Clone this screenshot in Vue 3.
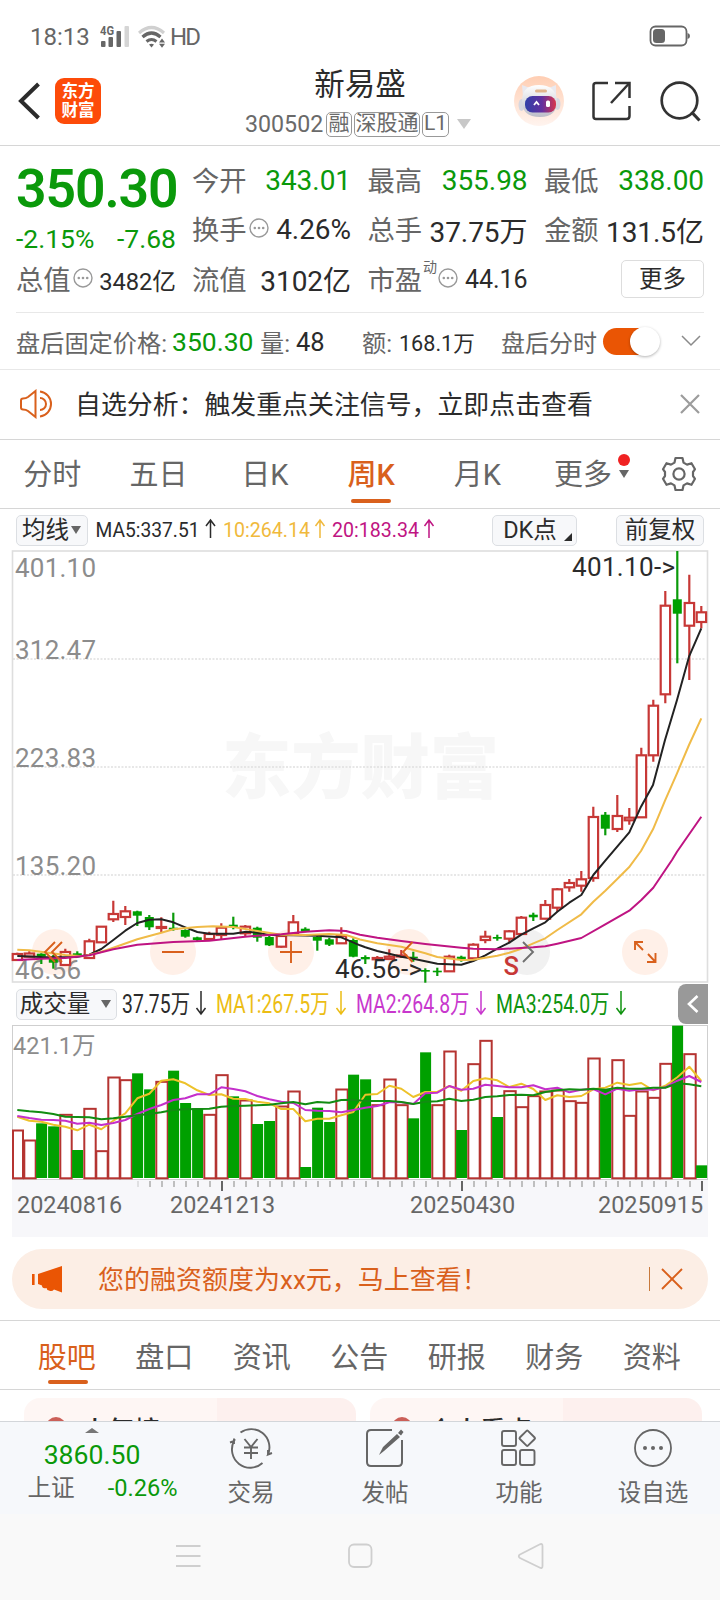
<script setup>
const X0 = 17.3
const STEP = 12
const cx = (i) => X0 + STEP * i

// Weekly candles: [direction, high, body top, body bottom, low], y in page pixels
const rows = [
  ['r', 952.7, 954, 960, 960], ['r', 951.3, 953.5, 956.7, 957.3], ['g', 953.3, 953.7, 956.7, 964], ['g', 955, 957.3, 962.7, 968.7],
  ['r', 948.7, 952, 965, 966], ['g', 951.3, 953.3, 955.3, 956.7], ['r', 938.7, 941.3, 958, 958.7], ['r', 926, 926.7, 942.3, 942.3],
  ['r', 900.7, 914, 919.3, 922], ['r', 906, 911.3, 917, 925], ['g', 910.7, 911.3, 915.7, 926], ['g', 915, 917, 927.3, 930],
  ['r', 917.3, 927, 928, 932], ['g', 912.7, 927.7, 929.7, 930.7], ['g', 929.3, 930, 936.7, 937.7], ['g', 936.7, 937.3, 940, 941.3],
  ['r', 931.7, 934, 939, 941], ['r', 923.3, 927.7, 935, 940], ['g', 916.7, 924.7, 927, 929.3], ['r', 925, 926.7, 933.3, 936],
  ['g', 926.7, 927.7, 937.7, 941.7], ['g', 935, 937, 945.3, 946], ['r', 934, 936, 946.7, 947.7], ['r', 915, 922.3, 934, 935.3],
  ['g', 927.3, 928.7, 931.7, 932.3], ['g', 936, 937, 940.7, 950.7], ['g', 937.7, 939.3, 944.7, 946], ['r', 927.3, 936, 943.3, 944],
  ['g', 938.3, 940, 956.7, 957.3], ['g', 955.3, 957, 959.3, 964], ['r', 956, 958, 959.3, 960], ['r', 949.3, 956.7, 959, 960],
  ['r', 950, 955.5, 956.5, 958], ['g', 951.7, 956.7, 958.3, 961.7], ['g', 968.3, 970, 971.7, 982.7], ['g', 967.7, 970.7, 972.3, 976],
  ['r', 954.7, 956.7, 971.3, 971.3], ['g', 955.7, 956.7, 960, 961.7], ['r', 943.3, 944.7, 958.3, 960], ['r', 930.7, 936.7, 940, 943.3],
  ['g', 934.7, 937, 938.7, 940.7], ['r', 930, 931.3, 938.7, 943.3], ['r', 916, 917.7, 934, 934], ['g', 912.7, 914.7, 917.3, 921],
  ['r', 900, 905, 918.7, 919.3], ['r', 888, 889.3, 907.7, 911.7], ['r', 879, 883, 887.3, 891.7], ['r', 871, 879.3, 885.7, 891.7],
  ['r', 806.7, 817, 878, 881.7], ['g', 812, 814.7, 828.7, 835.3], ['r', 795, 816, 829, 832], ['r', 808, 817.7, 820.3, 824.7],
  ['r', 747.7, 755.3, 817.3, 817.7], ['r', 699.7, 705.7, 755.3, 761.7], ['r', 591, 605.7, 694.3, 703.3], ['g', 551, 599.3, 613.7, 663.3],
  ['r', 574.7, 603, 625.7, 680], ['r', 606, 612.3, 622, 628.3],
]
const candles = rows.map(([d, h, t, b, l], i) => ({ x: cx(i), d, h, l, t, b }))

const ma5 = '17.3,956 41.3,957 65.3,957.3 77.3,956.7 89.3,954.7 101.3,949 113.3,940 125.3,930.7 137.3,923 149.3,919.7 161.3,919.3 173.3,922.3 185.3,927.3 197.3,932 209.3,933.7 233.3,933.7 246,931.7 257.3,932.7 269.3,935 293.3,935.3 317.3,935.7 341.3,937.3 360,945.3 365.3,947.3 377.3,951 389.3,953.7 401.3,956.7 413.3,958.7 425.3,961.3 437.3,963.7 461.3,964.7 473.3,961 485.3,955.3 497.3,948.7 509.3,942.7 521.3,934.7 533.3,928.3 545.3,922.3 557.3,911.7 569.3,902.7 581.3,895 593.3,875 605.3,860.7 629.3,832.3 641,806.7 653,785 665,740 677,700 689,656.7 701.3,628.3'
const ma10 = '17.3,949.7 29.3,950.3 50,953 65.3,955 83,956.3 100,952.3 113.3,947.7 137.3,939.3 149.3,936 161.3,932.7 173.3,929.3 197.3,927 213,926.3 233.3,927 257.3,931 281.3,934.7 305.3,935 329.3,934 346,935 360,939.5 377.3,943.3 401.3,946.7 425.3,953.3 437.3,957 461.3,960 473.3,959.7 497.3,955.7 509.3,952.7 521.3,948.7 533.3,943.3 545.3,938.3 557.3,930 581.3,914.3 593.3,901.7 605.3,890.7 617,879.3 629,867.3 641,851 653,829.3 665,800.7 677,773.3 689,745 701.3,718.3'
const ma20 = '17.3,960 41.3,958.7 65.3,958 89.3,955.3 113.3,949.3 137.3,944.7 173.3,942 209.3,940.7 245,936.7 257.3,935.7 281.3,934.3 305.3,931.7 329.3,930.3 346,931 360,934.7 377.3,937.7 401.3,941 425.3,944 461.3,947.7 473.3,948.7 497.3,949.3 533.3,947.3 545.3,946.3 557.3,943.7 581.3,938 605.3,924.3 629.3,910.7 641.3,900 653.3,887.7 672,860 677,851.7 701.3,816.7'

// Volume bars: top offset in thirds of a pixel below y = 1020
const volTop = [330, 360, 310, 319, 283, 390, 265, 392, 171, 179, 160, 208, 184, 152, 249, 265, 283, 164, 229, 240, 312, 303, 258, 213, 441, 263, 306, 207, 164, 178, 254, 177, 254, 295, 97, 254, 93, 330, 131, 61, 291, 212, 260, 227, 213, 210, 242, 247, 114, 210, 119, 286, 213, 232, 130, 17, 101, 436]
const flipped = { 35: 'r', 43: 'r', 57: 'g' }
const volumes = volTop.map((v, i) => ({ x: cx(i), y: 1020 + v / 3, d: flipped[i] || rows[i][0] }))
const pts = (a) => a.map((v, i) => `${cx(i).toFixed(1)},${(1020 + v / 3).toFixed(1)}`).join(' ')
const vma1 = pts([290, 302, 305, 314, 320, 331, 314, 328, 302, 280, 235, 221, 182, 178, 190, 211, 225, 223, 236, 237, 245, 250, 267, 267, 304, 296, 296, 286, 276, 224, 222, 197, 206, 231, 216, 216, 198, 212, 183, 175, 181, 201, 191, 207, 240, 226, 231, 228, 208, 203, 188, 195, 189, 211, 197, 172, 140, 183])
const vma2 = pts([288, 294, 299, 300, 302, 311, 308, 315, 309, 300, 282, 267, 255, 240, 235, 223, 223, 202, 207, 214, 228, 238, 245, 249, 270, 272, 273, 277, 270, 263, 258, 247, 247, 252, 220, 218, 198, 209, 206, 194, 198, 202, 202, 196, 208, 203, 217, 209, 207, 223, 206, 212, 208, 209, 202, 182, 168, 186])
const vma3 = pts([270, 274, 277, 282, 290, 291, 292, 298, 295, 290, 286, 282, 277, 270, 268, 267, 266, 260, 258, 257, 256, 254, 250, 246, 253, 246, 248, 240, 239, 243, 243, 243, 246, 252, 245, 244, 236, 243, 239, 231, 229, 225, 224, 226, 216, 211, 208, 209, 206, 209, 203, 206, 206, 203, 203, 190, 193, 199])
const ticks = Array.from({ length: 48 }, (_, k) => k + 10).map((i) => ({ x: cx(i) + 0.7, big: i % 20 === 17, o: i === 10 ? 0.4 : 1 }))

const grid = [659, 767, 875]
const scale = [['401.10', 577], ['312.47', 658.5], ['223.83', 766.5], ['135.20', 874.5], ['46.56', 979]]
const periods = ['分时', '五日', '日K', '周K', '月K']
const sections = ['股吧', '盘口', '资讯', '公告', '研报', '财务', '资料']
const knobs = [55, 173, 291, 409]
</script>

<template>
  <div class="screen">
    <div class="status">
      <span class="time">18:13</span>
      <svg class="signal" width="32" height="24" viewBox="0 0 32 24">
        <text x="0" y="9.500" font-size="12" font-weight="700" textLength="14" lengthAdjust="spacingAndGlyphs" fill="#666">4G</text>
        <rect x="1" y="16" width="4.500" height="6" rx="1" fill="#666" /><rect x="8.500" y="12" width="4.500" height="10" rx="1" fill="#666" />
        <rect x="16.500" y="6" width="4.500" height="16" rx="1" fill="#666" /><rect x="24.500" y="1" width="4.500" height="21" rx="1" fill="#d5d5d5" />
      </svg>
      <svg class="wifi" width="30" height="24" viewBox="0 0 30 24" fill="none">
        <path d="M1 8 Q13.500 -3 26 8" stroke="#d0d0d0" stroke-width="3.200" />
        <path d="M4.500 12 Q13.500 4 22.500 12" stroke="#666" stroke-width="3.200" /><path d="M8.500 16.500 Q13.500 12.500 18.500 16.500" stroke="#666" stroke-width="3" />
        <path d="M11 19.500 Q13.500 18 16 19.500 L13.500 22.500Z" fill="#666" /><path d="M21 17.500 L24 13.500 L27 17.500Z M21 18.800 L24 22.800 L27 18.800Z" fill="#666" />
      </svg>
      <span class="hd">HD</span>
      <svg class="battery" width="42" height="23" viewBox="0 0 42 23">
        <rect x="1.500" y="1.500" width="36" height="19" rx="5" fill="none" stroke="#666" stroke-width="1.800" />
        <rect x="4" y="4" width="12" height="14" rx="3.500" fill="#666" /><path d="M38.500 8 Q41 8.500 41 11 Q41 13.500 38.500 14Z" fill="#666" />
      </svg>
    </div>

    <header class="header">
      <svg class="back" width="24" height="40" viewBox="0 0 24 40"><path d="M20.500 3 L3 20 L20.500 37" fill="none" stroke="#2b2b2b" stroke-width="4" /></svg>
      <div class="logo"><b>东方</b><b>财富</b></div>
      <div class="title">
        <div class="name">新易盛</div>
        <div class="code"><span class="num">300502</span><i>融</i><i class="wide">深股通</i><i class="lv">L1</i><span class="caret"></span></div>
      </div>
      <svg class="robot" width="52" height="52" viewBox="0 0 52 52">
        <defs>
          <linearGradient id="halo" x1="0" y1="0" x2="0" y2="1"><stop offset="0" stop-color="#ffceb3" /><stop offset="1" stop-color="#fff4ef" /></linearGradient>
          <linearGradient id="shell" x1="0" y1="0" x2="0" y2="1"><stop offset="0" stop-color="#ffffff" /><stop offset="1" stop-color="#bcbdc8" /></linearGradient>
          <linearGradient id="visor" x1="0" y1="0" x2="1" y2="0"><stop offset="0" stop-color="#3040a8" /><stop offset=".55" stop-color="#63309f" /><stop offset="1" stop-color="#d8344c" /></linearGradient>
        </defs>
        <circle cx="26" cy="26" r="25" fill="url(#halo)" />
        <path d="M9 10 L17 13 L10 21Z M43 10 L36 13 L43 21Z" fill="#e9e9f0" />
        <ellipse cx="8.500" cy="30" rx="3" ry="6" fill="#d6d7e0" /><ellipse cx="44.500" cy="29" rx="3" ry="6" fill="#d6d7e0" />
        <path d="M9 26 Q9 10 26 10 Q43 10 44 26 Q44 42 27 42 Q9 42 9 26Z" fill="url(#shell)" />
        <rect x="22" y="14.500" width="12" height="3" rx="1.500" fill="#e1b48c" />
        <rect x="12" y="21" width="31" height="16.500" rx="7.500" fill="url(#visor)" />
        <path d="M21 30 L23.500 27 L26 30" fill="none" stroke="#fff" stroke-width="1.800" /><rect x="33" y="25.500" width="4" height="6.500" rx="1.500" fill="#fff" />
      </svg>
      <svg class="share" width="42" height="42" viewBox="0 0 42 42" fill="none" stroke="#333" stroke-width="2.500">
        <path d="M17 3 H5 Q2.500 3 2.500 5.500 V36.500 Q2.500 39 5 39 H35.500 Q38.500 39 38.500 36 V26" /><path d="M24 3 H38.500 V18" /><path d="M20 23 L38 3.500" />
      </svg>
      <svg class="search" width="44" height="42" viewBox="0 0 44 42" fill="none" stroke="#333" stroke-width="2.700"><circle cx="20.500" cy="20.500" r="17.800" /><path d="M32.500 32 L40.500 40.500" stroke-width="3.200" /></svg>
    </header>

    <section class="quote">
      <div class="main">
        <div class="price">350.30</div>
        <div class="pair green chg"><span>-2.15%</span><span>-7.68</span></div>
        <div class="pair cap"><label>总值</label><svg class="dots" viewBox="0 0 20 20"><circle class="ring" cx="10" cy="10" r="9" /><circle cx="5.800" cy="10" r="1.300" /><circle cx="10" cy="10" r="1.300" /><circle cx="14.200" cy="10" r="1.300" /></svg><em class="s23">3482亿</em></div>
      </div>
      <div class="cells">
        <div class="pair"><label>今开</label><em class="green">343.01</em></div>
        <div class="pair"><label>最高</label><em class="green">355.98</em></div>
        <div class="pair"><label>最低</label><em class="green">338.00</em></div>
        <div class="pair"><label>换手</label><svg class="dots" viewBox="0 0 20 20"><circle class="ring" cx="10" cy="10" r="9" /><circle cx="5.800" cy="10" r="1.300" /><circle cx="10" cy="10" r="1.300" /><circle cx="14.200" cy="10" r="1.300" /></svg><em>4.26%</em></div>
        <div class="pair"><label>总手</label><em>37.75万</em></div>
        <div class="pair"><label>金额</label><em>131.5亿</em></div>
        <div class="pair"><label>流值</label><em>3102亿</em></div>
        <div class="pair"><label>市盈</label><sup>动</sup><svg class="dots" viewBox="0 0 20 20"><circle class="ring" cx="10" cy="10" r="9" /><circle cx="5.800" cy="10" r="1.300" /><circle cx="10" cy="10" r="1.300" /><circle cx="14.200" cy="10" r="1.300" /></svg><em class="s25">44.16</em></div>
        <div class="pair end"><button class="more">更多</button></div>
      </div>
    </section>

    <section class="after">
      <span class="lab">盘后固定价格:</span><span class="green p">350.30</span><span class="lab q">量:</span><span class="v1">48</span>
      <span class="lab e">额:</span><span class="v2">168.1万</span><span class="lab f">盘后分时</span>
      <span class="toggle"><span class="knob"></span></span>
      <svg class="down" width="22" height="14" viewBox="0 0 22 14"><path d="M2 2 L11 11 L20 2" fill="none" stroke="#8a8a8a" stroke-width="1.500" /></svg>
    </section>

    <section class="notice">
      <svg width="36" height="30" viewBox="0 0 36 30" fill="none" stroke="#d9601c" stroke-width="2">
        <path d="M3 9.500 Q6 9.500 8 8 L15.500 2 V28 L8 22 Q6 20.500 3 20.500 Q1 20.500 1 18.500 V11.500 Q1 9.500 3 9.500Z" /><path d="M20 2.500 A12.600 12.600 0 0 1 20 27.500" /><path d="M20 9 A6 6 0 0 1 20 21" />
      </svg>
      <span>自选分析：触发重点关注信号，立即点击查看</span>
      <svg class="close" width="20" height="20" viewBox="0 0 20 20"><path d="M1 1 L19 19 M19 1 L1 19" stroke="#9c9c9c" stroke-width="2.200" /></svg>
    </section>

    <nav class="periods">
      <span v-for="p in periods" :key="p" class="tab" :class="{ on: p === '周K' }">{{ p }}</span>
      <span class="tab last">更多<span class="dot"></span><span class="tri"></span></span>
      <svg class="gear" width="36" height="36" viewBox="0 0 36 36" fill="none" stroke="#666" stroke-width="2.200" stroke-linejoin="round">
        <path d="M14.500 2 H21.500 L22.500 6.600 L26 8.600 L30.500 7.200 L34 13.200 L32 16 V20 L34 22.800 L30.500 28.800 L26 27.400 L22.500 29.400 L21.500 34 H14.500 L13.500 29.400 L10 27.400 L5.500 28.800 L2 22.800 L4 20 V16 L2 13.200 L5.500 7.200 L10 8.600 L13.500 6.600Z" /><circle cx="18" cy="18" r="5.600" />
      </svg>
    </nav>

    <div class="indicator">
      <button class="chip ma"><span class="t">均线</span><span class="tri"></span></button>
      <svg class="legend" width="350" height="36" viewBox="92 512 350 36" font-size="20.500">
        <g fill="#2b2b2b" stroke="#2b2b2b"><text x="95.500" y="537" textLength="104" lengthAdjust="spacingAndGlyphs">MA5:337.51</text><path d="M210.500 538 V520 M206 526 L210.500 520 L215 526" /></g>
        <g fill="#f0b93c" stroke="#f0b93c"><text x="223" y="537" textLength="87" lengthAdjust="spacingAndGlyphs">10:264.14</text><path d="M320 538 V520 M315.500 526 L320 520 L324.500 526" /></g>
        <g fill="#bf1482" stroke="#bf1482"><text x="332" y="537" textLength="87" lengthAdjust="spacingAndGlyphs">20:183.34</text><path d="M429 538 V520 M424.500 526 L429 520 L433.500 526" /></g>
      </svg>
      <button class="chip dk"><span class="t">DK点</span><span class="corner"></span></button>
      <button class="chip fq"><span class="t">前复权</span></button>
    </div>

    <svg class="chart" width="720" height="438" viewBox="0 546 720 438">
      <text x="222" y="793" font-size="70" font-weight="900" textLength="277" lengthAdjust="spacingAndGlyphs" fill="#f7f7f7">东方财富</text>
      <path v-for="g in grid" :key="g" :d="`M13 ${g}H706`" stroke="#e0e0e0" stroke-width="1.500" stroke-dasharray="2 1.500" />
      <rect x="12.500" y="551" width="695" height="431" fill="none" stroke="#dedede" stroke-width="1.600" />
      <circle v-for="k in knobs" :key="k" :cx="k" cy="952" r="23" fill="#fff0e8" />
      <circle cx="527" cy="952" r="23" fill="#f1f1f1" /><circle cx="645" cy="952" r="23" fill="#fff0e8" />
      <g font-size="26" fill="#8c8c8c"><text v-for="s in scale" :key="s[0]" x="15" :y="s[1]" :textLength="s[0].length > 5 ? 81 : 66">{{ s[0] }}</text></g>
      <g v-for="c in candles" :key="c.x">
        <template v-if="c.d === 'r'">
          <path :d="`M${c.x} ${c.h}V${c.t}M${c.x} ${c.b}V${c.l}`" stroke="#c73836" stroke-width="2.200" />
          <rect :x="c.x - 4.600" :y="c.t" width="9.400" :height="c.b - c.t" fill="#fff" stroke="#c73836" stroke-width="2.200" />
        </template>
        <template v-else>
          <path :d="`M${c.x} ${c.h}V${c.l}`" stroke="#0a9a0a" stroke-width="2.200" />
          <rect :x="c.x - 4.500" :y="c.t" width="9" :height="c.b - c.t" fill="#00a000" />
        </template>
      </g>
      <g fill="none" stroke-width="2" stroke-linejoin="round">
        <polyline :points="ma5" stroke="#222" /><polyline :points="ma10" stroke="#f0bb48" /><polyline :points="ma20" stroke="#bf1482" />
      </g>
      <g fill="none" stroke="#d9601c" stroke-width="1.900">
        <path d="M55 942 L45 952 L55 962 M62 942 L52 952 L62 962" /><path d="M162 952 H184 M280 952 H302 M291 941 V963" />
        <path d="M412.500 942 L403 952 L412.500 962" /><path d="M643 950 L635 942 M635 950 V942 H643 M648 954 L655.500 962 M655.500 953 V962 H647" />
        <path d="M523 942 L533 952 L523 962" stroke="#707070" />
      </g>
      <g font-size="26" fill="#2b2b2b"><text x="572" y="575.500" textLength="103">401.10-&gt;</text><text x="335" y="977.500" textLength="87">46.56-&gt;</text></g>
      <text x="503.500" y="975" font-size="25.500" font-weight="500" fill="#c73836">S</text>
    </svg>

    <div class="volbar">
      <button class="chip vol"><span class="t">成交量</span><span class="tri"></span></button>
      <svg class="vlegend" width="520" height="40" viewBox="118 984 520 40" font-size="25">
        <g fill="#2b2b2b" stroke="#2b2b2b"><text x="122" y="1013" textLength="68" lengthAdjust="spacingAndGlyphs">37.75万</text><path d="M201 991 V1014 M196.500 1008 L201 1014 L205.500 1008" /></g>
        <g fill="#ecbd14" stroke="#ecbd14"><text x="216" y="1013" textLength="113.500" lengthAdjust="spacingAndGlyphs">MA1:267.5万</text><path d="M341 991 V1014 M336.500 1008 L341 1014 L345.500 1008" /></g>
        <g fill="#c837cd" stroke="#c837cd"><text x="356" y="1013" textLength="113.500" lengthAdjust="spacingAndGlyphs">MA2:264.8万</text><path d="M481 991 V1014 M476.500 1008 L481 1014 L485.500 1008" /></g>
        <g fill="#0f930f" stroke="#0f930f"><text x="496" y="1013" textLength="113.500" lengthAdjust="spacingAndGlyphs">MA3:254.0万</text><path d="M621 991 V1014 M616.500 1008 L621 1014 L625.500 1008" /></g>
      </svg>
      <span class="fold"><svg width="14" height="20" viewBox="0 0 14 20"><path d="M11.500 2 L3 10 L11.500 18" fill="none" stroke="#fff" stroke-width="2.600" /></svg></span>
    </div>

    <svg class="volume" width="720" height="213" viewBox="0 1024 720 213">
      <rect x="12" y="1180" width="696" height="57" fill="#f7f7fa" />
      <rect x="12.500" y="1025.500" width="695" height="154" fill="#fff" stroke="#cfcfcf" />
      <text x="13" y="1054" font-size="23.500" fill="#8c8c8c">421.1万</text>
      <template v-for="v in volumes" :key="v.x">
        <rect v-if="v.d === 'g'" :x="v.x - 5.200" :y="v.y" width="11" :height="1178 - v.y" fill="#00a000" />
        <rect v-else :x="Math.max(v.x - 5, 13)" :y="v.y + 0.500" :width="v.x < 20 ? 10 : 11.400" :height="1177.800 - v.y" fill="#fff" stroke="#b53431" stroke-width="2" />
      </template>
      <g fill="none" stroke-width="2" stroke-linejoin="round">
        <polyline :points="vma1" stroke="#edc22a" /><polyline :points="vma2" stroke="#c42fcb" /><polyline :points="vma3" stroke="#128c12" />
      </g>
      <path v-for="t in ticks" :key="t.x" :d="`M${t.x} 1181V${t.big ? 1191 : 1187}`" :stroke="t.big ? '#666' : '#b8b8b8'" :stroke-width="t.big ? 2 : 1.800" :opacity="t.o" />
      <g font-size="23.400" fill="#666"><text x="17" y="1212.500">20240816</text><text x="170" y="1212.500">20241213</text><text x="410" y="1212.500">20250430</text><text x="598" y="1212.500">20250915</text></g>
    </svg>

    <div class="promo">
      <svg width="32" height="28" viewBox="0 0 32 28" fill="#ea5504"><rect x="0" y="9" width="2.600" height="11" /><path d="M6 9 L30 1 V27.500 L22 24.500 Q20 27 17 25.500 Q15 25.500 14.500 23 Q10 24 10 20.500 L6 19Z" /></svg>
      <span class="msg">您的融资额度为xx元，马上查看！</span>
      <span class="bar"></span>
      <svg class="px" width="22" height="22" viewBox="0 0 22 22"><path d="M1 1 L21 21 M21 1 L1 21" stroke="#d9601c" stroke-width="1.900" /></svg>
    </div>

    <nav class="sections"><span v-for="s in sections" :key="s" :class="{ on: s === '股吧' }">{{ s }}</span></nav>

    <div class="cards">
      <div class="card"><span class="ball"></span><b>人气榜</b></div>
      <div class="card"><span class="ball"></span><b>个人看点</b></div>
    </div>

    <footer class="bottom">
      <div class="index">
        <span class="up"></span>
        <div class="val green">3860.50</div>
        <div class="sub"><span>上证</span><span class="green">-0.26%</span></div>
      </div>
      <div class="act">
        <svg width="44" height="42" viewBox="0 0 44 42" fill="none" stroke="#666" stroke-width="1.900">
          <path d="M11.500 5.500 A18.300 18.300 0 0 1 39 27.500 L43 26 M39 27.500 V23" /><path d="M33.500 36 A18.300 18.300 0 0 1 5 14 L1 15.500 M5 11.500 V17" /><path d="M15.500 12 L22 20 L28.500 12 M15 20.500 H29 M15 26 H29 M22 20 V32" />
        </svg><span>交易</span>
      </div>
      <div class="act">
        <svg width="44" height="42" viewBox="0 0 44 42" fill="none" stroke="#666" stroke-width="2">
          <path d="M29 3 H8 Q4 3 4 7 V35 Q4 39 8 39 H35 Q39 39 39 35 V13" /><path d="M16 28 L20 20 L34 7 L37 10 L21 24Z M35 6 L38 2.500 L40.500 5 L38 8.500Z" fill="#666" stroke="none" />
        </svg><span>发帖</span>
      </div>
      <div class="act">
        <svg width="44" height="42" viewBox="0 0 44 42" fill="none" stroke="#666" stroke-width="1.900">
          <rect x="5" y="4" width="14" height="15" rx="2" /><rect x="5" y="23" width="14" height="15" rx="2" /><rect x="23" y="23" width="14.500" height="15" rx="2" /><rect x="24.500" y="5.500" width="11.500" height="11.500" rx="1" transform="rotate(45 30.250 11.250)" />
        </svg><span>功能</span>
      </div>
      <div class="act">
        <svg width="44" height="42" viewBox="0 0 44 42" fill="none" stroke="#666" stroke-width="1.800">
          <circle cx="22" cy="21" r="18" /><g fill="#666" stroke="none"><circle cx="14" cy="21" r="2" /><circle cx="22" cy="21" r="2" /><circle cx="30" cy="21" r="2" /></g>
        </svg><span>设自选</span>
      </div>
    </footer>
    <div class="sysnav">
      <svg width="720" height="86" viewBox="0 1514 720 86" fill="none" stroke="#cfcfcf" stroke-width="1.800">
        <path d="M176 1546 H200.500 M176 1556 H200.500 M176 1566 H200.500" /><rect x="349" y="1544.500" width="22.500" height="22.500" rx="5" /><path d="M539.500 1544.500 Q542.500 1543 542.500 1546 V1566 Q542.500 1569 539.500 1567.500 L520 1558 Q517.500 1556 520 1554.500Z" />
      </svg>
    </div>
  </div>
</template>

<style>
body { background: #fff; }
</style>

<style scoped>
* { box-sizing: border-box; }
.screen { width: 720px; height: 1600px; overflow: hidden; background: #fff; color: #2b2b2b; font-family: Roboto, "Noto Sans CJK SC", sans-serif; display: flex; flex-direction: column; }
.screen > * { flex: none; }
svg { display: block; flex: none; }
span, em, label, i { white-space: nowrap; font-style: normal; }
svg text { stroke: none; }
button { font: inherit; color: inherit; padding: 0; }
.green { color: #0a990a; }

.status { height: 73px; display: flex; align-items: center; color: #666; font-size: 24px; padding: 0 29px 0 30px; }
.time { width: 70px; }
.signal { margin-top: 1px; }
.wifi { margin-left: 6px; }
.hd { margin-left: 2px; letter-spacing: -1.800px; }
.battery { margin-left: auto; }

.header { height: 73px; display: flex; align-items: center; border-bottom: 1px solid #d6d6d6; padding-bottom: 17px; }
.back { margin-left: 18px; }
.logo { width: 46px; height: 46px; margin-left: 13px; border-radius: 9px; background: #fd4b09; color: #fff; display: flex; flex-direction: column; align-items: center; justify-content: center; font-size: 16.500px; line-height: 19px; }
.title { width: 240px; margin-left: 139px; height: 73px; display: flex; flex-direction: column; align-self: flex-start; }
.name { font-size: 30.500px; line-height: 36px; text-align: center; height: 36px; margin-top: -6px; }
.code { height: 28px; margin-top: 7px; margin-left: 5px; display: flex; align-items: center; color: #6a6a6a; }
.num { font-size: 23.200px; width: 81px; }
.code i { height: 25px; width: 26px; border: 1.500px solid #999; border-radius: 5px; font-size: 21px; line-height: 20px; text-align: center; margin-right: 2px; }
.code i.wide { width: 66px; }
.code i.lv { width: 27px; }
.caret { border: 7px solid transparent; border-top: 10px solid #c8c8c8; border-bottom: 0; margin-left: 6px; }
.robot { margin-left: 33px; }
.share { margin-left: 26px; }
.search { margin-left: 26px; }

.quote { height: 166px; display: flex; padding: 9px 16px 0; }
.main { width: 160px; }
.price { height: 66px; line-height: 68px; font-size: 53.500px; font-weight: 600; color: #0a990a; letter-spacing: -1.100px; text-align: center; }
.pair { display: flex; align-items: center; justify-content: space-between; height: 49.500px; font-size: 28px; }
.pair label { color: #666; font-size: 27.300px; margin-top: -2px; margin-left: -1px; }
.pair em { margin-left: auto; margin-top: 1px; letter-spacing: -0.050px; }
.pair.chg { height: 34px; font-size: 26.500px; }
.pair.cap { height: 48px; }
.pair.cap label { margin-left: 0; }
.pair em.s23 { font-size: 23.700px; }
.pair em.s25 { font-size: 25px; }
.pair sup { font-size: 14px; line-height: 14px; color: #666; align-self: flex-start; margin: 6px -1px 0 1px; }
.pair .dots { width: 20px; height: 20px; margin-top: -2px; margin-left: 2px; fill: #999; }
.dots .ring { fill: none; stroke: #999; stroke-width: 1.400; }
.cells { margin-left: 17px; display: grid; grid-template-columns: 158px 159px 159px; column-gap: 17.500px; grid-auto-rows: 49.500px; }
.pair.end { justify-content: flex-end; }
.more { width: 83px; height: 38px; background: #fff; border: 1px solid #ddd; border-radius: 5px; font-size: 23.500px; line-height: 34px; margin-top: 1px; }

.after { height: 58px; border-bottom: 1px solid #e8e8e8; display: flex; align-items: center; padding: 2px 0 0 16px; position: relative; }
.after::before { content: ""; position: absolute; left: 16px; right: 16px; top: 0; height: 1px; background: #e8e8e8; }
.lab { color: #666; font-size: 24.200px; }
.after .p { font-size: 26.500px; margin-left: 5px; width: 83px; }
.after .q { margin-left: 5px; width: 30px; }
.after .v1 { font-size: 25.500px; margin-left: 6px; width: 38px; }
.after .e { margin-left: 28px; width: 30px; }
.after .v2 { font-size: 21.600px; margin-left: 7px; width: 76px; }
.after .f { margin-left: 26px; width: 96px; font-size: 24px; }
.toggle { width: 54px; height: 27px; border-radius: 14px; background: #ea5504; margin-left: 6px; display: flex; justify-content: flex-end; align-items: center; margin-top: -1px; }
.knob { width: 30px; height: 29px; border-radius: 50%; background: #fff; box-shadow: 0 1px 3px rgba(0, 0, 0, .3); margin-right: -3px; flex: none; }
.down { margin-left: 23px; margin-top: -2px; }

.notice { height: 70px; border-bottom: 1px solid #d6d6d6; display: flex; align-items: center; padding: 0 20px 2px; font-size: 25.900px; }
.notice span { margin: -3px 0 0 19px; }
.close { margin-left: auto; }

.periods { height: 69px; border-bottom: 1px solid #d6d6d6; display: flex; align-items: center; color: #666; font-size: 29px; }
.tab { width: 106.300px; height: 68px; text-align: center; line-height: 71px; position: relative; padding-right: 2px; }
.on { color: #d9601c; }
.tab.on { font-weight: 500; }
.on::after { content: ""; position: absolute; left: 50%; margin-left: -20px; bottom: 4px; width: 40px; height: 4px; border-radius: 2px; background: #d9601c; }
.tab.on::after { margin-left: -21px; bottom: 5px; }
.tab.last { width: 106px; padding-right: 3px; }
.tri { display: inline-block; border: 5px solid transparent; border-top: 8px solid #666; border-bottom: 0; }
.last .tri { position: absolute; right: 8px; top: 30px; }
.dot { position: absolute; right: 7px; top: 14px; width: 12px; height: 12px; border-radius: 50%; background: #f02222; }
.gear { margin-left: 24px; }

.indicator { height: 37px; display: flex; align-items: center; padding: 5px 16px 0; }
.chip { background: #f7f8fa; border: 1px solid #dcdfe3; border-radius: 5px; height: 31px; font-size: 23.500px; line-height: 27px; display: flex; align-items: center; justify-content: center; white-space: nowrap; flex: none; position: relative; }
.ma { width: 72px; }
.ma .t { margin-left: -1px; }
.ma .tri { margin-left: 2px; }
.legend { margin-left: 4px; }
.dk { width: 85px; margin-left: 50px; padding-right: 9px; }
.corner { position: absolute; right: 4px; bottom: 4px; border-left: 8px solid transparent; border-bottom: 8px solid #2b2b2b; }
.fq { width: 88px; margin-left: auto; }

.volbar { height: 40px; display: flex; align-items: center; padding: 0 12px 0 16px; }
.vol { width: 101px; }
.vol .t { margin-left: -2px; }
.vol .tri { margin-left: 11px; }
.vlegend { margin-left: 1px; }
.fold { margin-left: auto; width: 30px; height: 40px; background: #999; border-radius: 8px 0 0 8px; display: flex; align-items: center; justify-content: center; }

.legend path, .vlegend path { fill: none; stroke-width: 1.500; }
.promo { margin: 12px 12px 11px; height: 60px; border-radius: 30px; background: #fceee5; display: flex; align-items: center; padding: 0 25px 0 20px; color: #d9601c; font-size: 26px; }
.msg { margin: -4px 0 0 34px; }
.bar { width: 1.500px; height: 24px; background: #c8793c; margin-left: auto; margin-right: 11px; }

.sections { height: 70px; border-top: 1px solid #d6d6d6; border-bottom: 1px solid #d6d6d6; display: flex; padding: 0 18px; font-size: 29px; color: #666; }
.sections span { width: 97.500px; height: 68px; text-align: center; line-height: 74px; position: relative; flex: none; }
.sections .on::after { bottom: 5px; margin-left: -19px; }

.cards { height: 31px; padding: 8px 18px 0 24px; display: flex; gap: 14px; overflow: hidden; }
.card { width: 332px; height: 90px; border-radius: 16px; background: linear-gradient(90deg, #fef6f4 0 58%, #fdf0ee 58%); display: flex; padding: 17px 0 0 22px; flex: none; }
.ball { width: 20px; height: 20px; border-radius: 50%; background: #cb5f58; margin-top: 2px; }
.card b { font-size: 26px; line-height: 32px; font-weight: 500; margin-left: 16px; }

.bottom { height: 93px; border-top: 1px solid #d3d6da; background: #f6f8fb; display: flex; color: #666; }
.index { width: 184px; display: flex; flex-direction: column; align-items: center; }
.up { border: 7px solid transparent; border-bottom: 5px solid #777; border-top: 0; margin-top: 6px; }
.val { font-size: 26.600px; line-height: 32px; margin-top: 6px; }
.sub { width: 150px; display: flex; justify-content: space-between; font-size: 23.600px; line-height: 35px; margin-left: 21px; }
.act { width: 134px; display: flex; flex-direction: column; align-items: center; padding-top: 5px; font-size: 23.500px; line-height: 34px; }
.act span { margin-top: 7px; }
.sysnav { height: 86px; background: #f9f9f9; }
</style>
